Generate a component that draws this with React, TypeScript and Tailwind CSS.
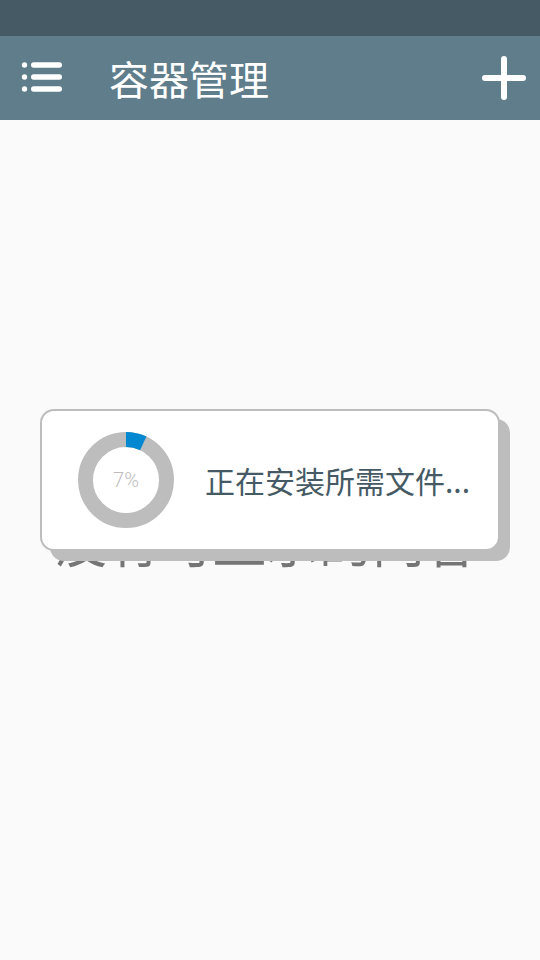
import React from 'react';

const FONT = '"Noto Sans CJK SC", "Noto Sans", Roboto, sans-serif';

function MenuIcon() {
  return (
    <svg width="44" height="36" viewBox="0 0 44 36" fill="#ffffff">
      {[5, 17, 29].map((y) => (
        <g key={y}>
          <circle cx="4.5" cy={y} r="2.7" />
          <rect x="11" y={y - 2.7} width="31" height="5.4" rx="2.7" />
        </g>
      ))}
    </svg>
  );
}

function PlusIcon() {
  return (
    <svg width="44" height="44" viewBox="0 0 44 44" fill="none" stroke="#ffffff" strokeWidth="6" strokeLinecap="round">
      <line x1="3" y1="22" x2="41" y2="22" />
      <line x1="22" y1="3" x2="22" y2="41" />
    </svg>
  );
}

function ProgressRing({ percent }: { percent: number }) {
  const r = 40.5;
  const c = 2 * Math.PI * r;
  return (
    <div className="relative w-[96px] h-[96px] shrink-0">
      <svg width="96" height="96" viewBox="0 0 96 96" className="-rotate-90">
        <circle cx="48" cy="48" r={r} fill="none" stroke="#bdbdbd" strokeWidth="15" />
        <circle
          cx="48"
          cy="48"
          r={r}
          fill="none"
          stroke="#0288d1"
          strokeWidth="15"
          strokeDasharray={`${(c * percent) / 100} ${c}`}
        />
      </svg>
      <div
        className="absolute inset-0 flex items-center justify-center text-[20px] text-[#bdbdbd] font-light"
        style={{ fontFamily: 'Roboto, "Noto Sans", sans-serif' }}
      >
        {percent}%
      </div>
    </div>
  );
}

export default function App() {
  return (
    <div className="w-[540px] h-[960px] flex flex-col bg-[#fafafa] relative overflow-hidden" style={{ fontFamily: FONT }}>
      {/* Barre d'état */}
      <div className="h-9 bg-[#455a64]" />

      {/* Barre d'outils */}
      <div className="h-[84px] bg-[#607d8b] flex items-center pl-[20px] pr-[14px]">
        <MenuIcon />
        <div className="ml-[45px] text-[40px] leading-none text-white">容器管理</div>
        <div className="ml-auto">
          <PlusIcon />
        </div>
      </div>

      {/* Contenu vide */}
      <div className="flex-1 flex items-center justify-center">
        <div className="text-[53px] leading-none text-[#757575] -ml-[8px] mt-[1px]">没有可显示的内容</div>
      </div>

      {/* Dialogue d'installation */}
      <div className="absolute inset-0 flex items-center justify-center">
        <div className="w-[460px] h-[142px] bg-white border-2 border-[#bdbdbd] rounded-[14px] shadow-[10px_10px_0_#bdbdbd] flex items-center pl-[36px]">
          <ProgressRing percent={7} />
          <div className="ml-[31px] text-[30px] leading-none text-[#455a64] whitespace-nowrap">正在安装所需文件...</div>
        </div>
      </div>
    </div>
  );
}
